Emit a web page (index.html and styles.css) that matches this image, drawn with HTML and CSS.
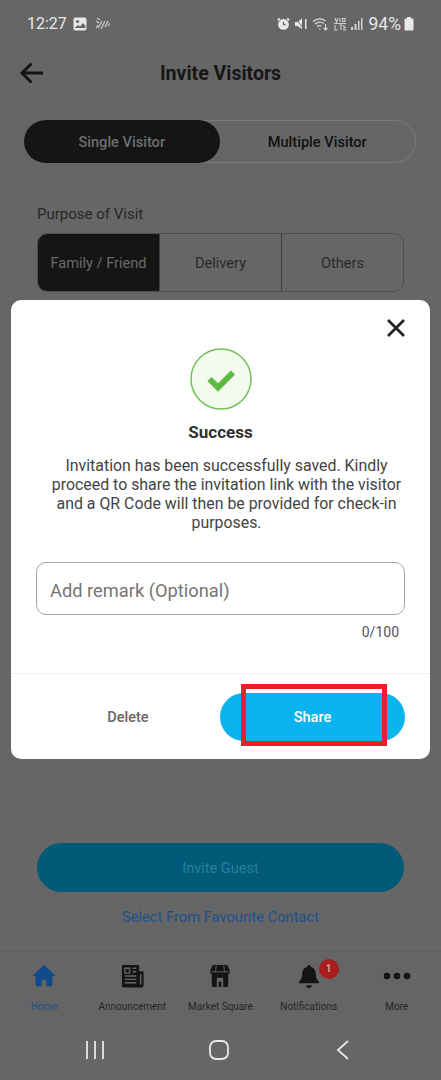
FILE: index.html
```html
<!DOCTYPE html>
<html>
<head>
  <meta charset="utf-8">
  <title>Invite Visitors</title>
  <link rel="stylesheet" href="styles.css">
</head>
<body>
  <div class="pantalla">
    <div class="estado">
      <div class="estado-lado">
        <span class="hora">12:27</span>
        <svg width="14" height="14" viewBox="0 0 14 14"><rect width="13" height="13" x=".5" y=".5" rx="2" fill="#e8e8e8"/><circle cx="4.500" cy="4.500" r="1.600" fill="#666"/><path d="M1.500 11l3.500-3 2 1.600L10 6l2.500 3v2z" fill="#666"/></svg>
        <svg width="16" height="14" viewBox="0 0 16 14" stroke="#c8c8c8" stroke-width="1.300" fill="none"><path d="M3 1l3 2M2 4l3 2M4 8L2 11M8 4l-4 7M11 4l-4 8M14 4l-3 6M16 6l-2 3"/></svg>
      </div>
      <div class="estado-lado derecha">
        <svg width="13" height="14" viewBox="0 0 14 14"><circle cx="7" cy="7.500" r="5.800" fill="#e8e8e8"/><path d="M1 3l2-2M13 3l-2-2" stroke="#e8e8e8" stroke-width="2"/><path d="M7 4.500v3.300h2.500" stroke="#666" stroke-width="1.300" fill="none"/></svg>
        <svg width="14" height="14" viewBox="0 0 14 14" fill="#e8e8e8"><path d="M1 5h2.500L8 1.500V12L3.500 9H1z"/><path d="M1 1l9 11" stroke="#666" stroke-width="1"/><rect x="11" y="2" width="1.500" height="10"/></svg>
        <svg width="17" height="14" viewBox="0 0 17 14" fill="none" stroke="#d8d8d8" stroke-width="1.200"><path d="M1 4.500c4-3.500 9-3.500 12.500-.5M3 7c3-2.500 6-2.500 9-.5M5 9.500c1.500-1.200 3-1.200 4.500-.3"/><path d="M7 12h1.500M13.500 7v6M11.500 11l2 2 2-2"/></svg>
        <svg width="14" height="14" viewBox="0 0 14 14" stroke="#cfcfcf" stroke-width="1.100" fill="none"><path d="M2 1l1.500 4L5 1M7 1v4M9.500 1.500h2.500v3H9.500zM1 6.500h12M2 8v5h2.500M6.500 8h3M8 8v5M11 8v5h2M11 10.500h2"/></svg>
        <svg width="12" height="14" viewBox="0 0 12 14" fill="#d0d0d0"><rect x="0" y="10" width="2" height="3"/><rect x="3.500" y="7" width="2" height="6"/><rect x="7" y="4" width="1.500" height="9"/><rect x="10" y="1" width="1.500" height="12"/></svg>
        <span class="porcentaje">94%</span>
        <svg class="bateria" width="10" height="14" viewBox="0 0 10 14" fill="#e8e8e8"><rect x="3" y="0" width="4" height="2"/><rect x="0.500" y="1.500" width="9" height="12" rx="1"/></svg>
      </div>
    </div>

    <div class="cabecera">
      <svg class="atras" width="26" height="26" viewBox="0 0 26 26" fill="none" stroke="#141414" stroke-width="3"><path d="M24 13H3.500M12.500 3.500L3 13l9.500 9.500"/></svg>
      <h1>Invite Visitors</h1>
    </div>

    <div class="tabs">
      <div class="tab activo">Single Visitor</div>
      <div class="tab">Multiple Visitor</div>
    </div>

    <div class="proposito">
      <p class="etiqueta">Purpose of Visit</p>
      <div class="opciones">
        <div class="opcion activo">Family / Friend</div>
        <div class="opcion">Delivery</div>
        <div class="opcion">Others</div>
      </div>
    </div>

    <div class="acciones">
      <div class="invitar">Invite Guest</div>
      <div class="favorito">Select From Favourite Contact</div>
    </div>

    <div class="menu">
      <div class="menu-item azul">
        <svg width="26" height="26" viewBox="0 0 28 26" fill="#0f4a8a"><path d="M14 1L1.500 13h3.500v11h6.500v-7h5v7H23V13h3.500z"/></svg>
        <span>Home</span>
      </div>
      <div class="menu-item">
        <svg width="25" height="26" viewBox="0 0 26 26"><path d="M2 3a1.500 1.500 0 0 1 1.500-1.500h15A1.500 1.500 0 0 1 20 3v5h4.500v15a2 2 0 0 1-2 2h-19A1.500 1.500 0 0 1 2 23.500z" fill="#141414"/><path d="M5 5h5v5H5zM13 5h4M13 8.500h4M5 13h12M5 16.500h12M5 20h12" stroke="#666" stroke-width="1.500" fill="none"/><path d="M21.500 11v11" stroke="#666" stroke-width="1.500"/></svg>
        <span>Announcement</span>
      </div>
      <div class="menu-item">
        <svg width="22" height="26" viewBox="0 0 24 26" fill="#141414"><path d="M4 1h16l3 7a3 3 0 0 1-2 3v12a2 2 0 0 1-2 2H5a2 2 0 0 1-2-2V11a3 3 0 0 1-2-3z"/><path d="M1.500 8.500h21M8 1.500L7 8.500M16 1.500l1 7" stroke="#666" stroke-width="1"/><path d="M8.500 15h7v10h-7z" fill="#666"/><path d="M10.500 19h3v6h-3z" fill="#141414"/></svg>
        <span>Market Square</span>
      </div>
      <div class="menu-item">
        <svg width="22" height="26" viewBox="0 0 24 26" fill="#141414"><path d="M12 1a2 2 0 0 1 2 2.200c4 1 5.500 4.500 5.500 8.300 0 4 1.500 6 3.500 8v1.500H1v-1.500c2-2 3.500-4 3.500-8 0-3.800 1.500-7.300 5.500-8.300A2 2 0 0 1 12 1z"/><path d="M9 23h6a3 3 0 0 1-6 0z"/></svg>
        <span>Notifications</span>
        <div class="globo">1</div>
      </div>
      <div class="menu-item">
        <svg width="28" height="26" viewBox="0 0 28 26" fill="#141414"><circle cx="4" cy="13" r="3.300"/><circle cx="14" cy="13" r="3.300"/><circle cx="24" cy="13" r="3.300"/></svg>
        <span>More</span>
      </div>
    </div>

    <div class="sistema">
      <svg width="20" height="20" viewBox="0 0 20 20" stroke="#e8e8e8" stroke-width="1.800"><path d="M2 1v18M10 1v18M18 1v18"/></svg>
      <svg width="20" height="20" viewBox="0 0 20 20" fill="none" stroke="#e8e8e8" stroke-width="1.800"><rect x="1" y="1" width="18" height="18" rx="6"/></svg>
      <svg width="14" height="20" viewBox="0 0 14 20" fill="none" stroke="#e8e8e8" stroke-width="1.800"><path d="M12 1L2 10l10 9"/></svg>
    </div>

    <!-- ventana de exito -->
    <div class="modal">
      <svg class="cerrar" width="20" height="20" viewBox="0 0 20 20" stroke="#262626" stroke-width="2.800"><path d="M2 2l16 16M18 2L2 18"/></svg>
      <div class="modal-cuerpo">
        <svg class="exito" width="62" height="62" viewBox="0 0 62 62"><circle cx="31" cy="31" r="30" fill="#f3fbef" stroke="#72bf5c" stroke-width="1.500"/><path d="M19.500 31l8.500 8.500L43 24.500" fill="none" stroke="#5dbb3f" stroke-width="6"/></svg>
        <h2>Success</h2>
        <p class="mensaje">Invitation has been successfully saved. Kindly proceed to share the invitation link with the visitor and a QR Code will then be provided for check-in purposes.</p>
        <div class="remark">Add remark (Optional)</div>
        <div class="contador">0/100</div>
      </div>
      <div class="modal-pie">
        <div class="borrar">Delete</div>
        <div class="compartir">Share</div>
      </div>
      <div class="marca"></div>
    </div>
  </div>
</body>
</html>
```

FILE: styles.css
```css
* {
  box-sizing: border-box;
}

body {
  margin: 0;
  background: #666666;
  font-family: Roboto, "Liberation Sans", sans-serif;
}

h1, h2, p {
  margin: 0;
}

.pantalla {
  position: relative;
  width: 441px;
  height: 1080px;
  display: flex;
  flex-direction: column;
  overflow: hidden;
}

.estado {
  height: 47px;
  padding: 0 27px;
  display: flex;
  justify-content: space-between;
  align-items: center;
  color: #e8e8e8;
}

.estado-lado {
  display: flex;
  align-items: center;
  gap: 7px;
}

.estado-lado.derecha {
  gap: 4px;
}

.hora {
  font-size: 16px;
  margin-right: -1px;
}

.porcentaje {
  font-size: 17.500px;
  margin-left: 2px;
}

.bateria {
  margin-left: -1px;
}

.cabecera {
  position: relative;
  height: 60px;
  padding-bottom: 6px;
  display: flex;
  align-items: center;
  justify-content: center;
  border-bottom: 1px solid #636363;
}

.cabecera h1 {
  font-size: 19.500px;
  font-weight: 700;
  color: #161616;
}

.atras {
  position: absolute;
  left: 19px;
  top: 13px;
}

.tabs {
  margin: 13px 25px 0 24px;
  height: 43px;
  display: flex;
  border: 1px solid #7a7a7a;
  border-radius: 22px;
}

.tab {
  flex: 1;
  display: flex;
  align-items: center;
  justify-content: center;
  font-size: 14.600px;
  font-weight: 500;
  color: #111111;
  border-radius: 22px;
}

.tab.activo {
  background: #151515;
  color: #6e6e6e;
  margin: -1px 0 -1px -1px;
}

.proposito {
  padding: 0 37px;
  margin-top: 43px;
}

.etiqueta {
  font-size: 15px;
  line-height: 16px;
  color: #282828;
}

.opciones {
  margin-top: 11px;
  height: 59px;
  display: flex;
  border: 1px solid #4f4f4f;
  border-radius: 10px;
  overflow: hidden;
}

.opcion {
  flex: 1;
  display: flex;
  align-items: center;
  justify-content: center;
  padding-top: 1px;
  font-size: 14.600px;
  color: #2a2a2a;
  border-left: 1px solid #3f3f3f;
}

.opcion.activo {
  background: #151515;
  color: #6a6a6a;
  border-left: none;
}

.acciones {
  margin-top: auto;
  padding: 0 37px;
  display: flex;
  flex-direction: column;
  align-items: stretch;
}

.invitar {
  height: 49px;
  padding-top: 1px;
  display: flex;
  align-items: center;
  justify-content: center;
  background: #005a78;
  color: #2a7f98;
  font-size: 14.500px;
  border-radius: 25px;
}

.favorito {
  margin-top: 17px;
  margin-bottom: 26px;
  line-height: 16px;
  text-align: center;
  font-size: 14.700px;
  color: #21508c;
}

.menu {
  height: 67px;
  display: grid;
  grid-template-columns: repeat(5, 1fr);
  padding-top: 11px;
  border-top: 1px solid #5f5f5f;
  background: #656565;
}

.menu-item {
  position: relative;
  display: flex;
  flex-direction: column;
  align-items: center;
  gap: 12px;
  font-size: 10px;
  line-height: 12px;
  color: #262626;
}

.menu-item.azul {
  color: #1f4f8c;
}

.globo {
  position: absolute;
  left: 54px;
  top: -4px;
  width: 20px;
  height: 20px;
  border-radius: 50%;
  background: #a81e1e;
  color: #d8a0a0;
  font-size: 10px;
  font-weight: 700;
  display: flex;
  align-items: center;
  justify-content: center;
}

.sistema {
  height: 62px;
  display: grid;
  grid-template-columns: repeat(3, 124px);
  justify-content: center;
  justify-items: center;
  align-items: center;
  padding: 2px 3px 0 0;
}

.modal {
  position: absolute;
  left: 11px;
  top: 300px;
  width: 419px;
  height: 459px;
  background: #ffffff;
  border-radius: 10px;
  display: flex;
  flex-direction: column;
}

.cerrar {
  position: absolute;
  right: 24px;
  top: 18px;
}

.modal-cuerpo {
  flex: 1;
  padding: 48px 25px 0;
  display: flex;
  flex-direction: column;
  align-items: center;
}

.modal-cuerpo h2 {
  margin-top: 12px;
  font-size: 17px;
  line-height: 20px;
  font-weight: 700;
  color: #303030;
}

.mensaje {
  margin-top: 14px;
  width: 372px;
  padding-left: 12px;
  text-align: center;
  font-size: 15.900px;
  line-height: 19px;
  color: #444444;
}

.remark {
  align-self: stretch;
  margin-top: 30px;
  height: 53px;
  padding: 4px 13px 0;
  display: flex;
  align-items: center;
  border: 1px solid #a5a5a5;
  border-radius: 10px;
  font-size: 18.300px;
  color: #757575;
}

.contador {
  align-self: flex-end;
  margin: 8px 6px 0 0;
  font-size: 14px;
  line-height: 18px;
  color: #555555;
}

.modal-pie {
  height: 86px;
  padding: 19px 25px 18px 0;
  display: flex;
  align-items: stretch;
  border-top: 1px solid #eeeeee;
}

.borrar {
  flex: 1;
  display: flex;
  align-items: center;
  justify-content: center;
  font-size: 14.500px;
  font-weight: 500;
  color: #666666;
  padding-left: 25px;
}

.compartir {
  width: 185px;
  display: flex;
  align-items: center;
  justify-content: center;
  background: #0bb4ee;
  color: #ffffff;
  font-size: 14.600px;
  font-weight: 500;
  border-radius: 24px;
}

.marca {
  position: absolute;
  left: 230px;
  top: 384px;
  width: 146px;
  height: 62px;
  border: 5px solid #e8202c;
}
```
